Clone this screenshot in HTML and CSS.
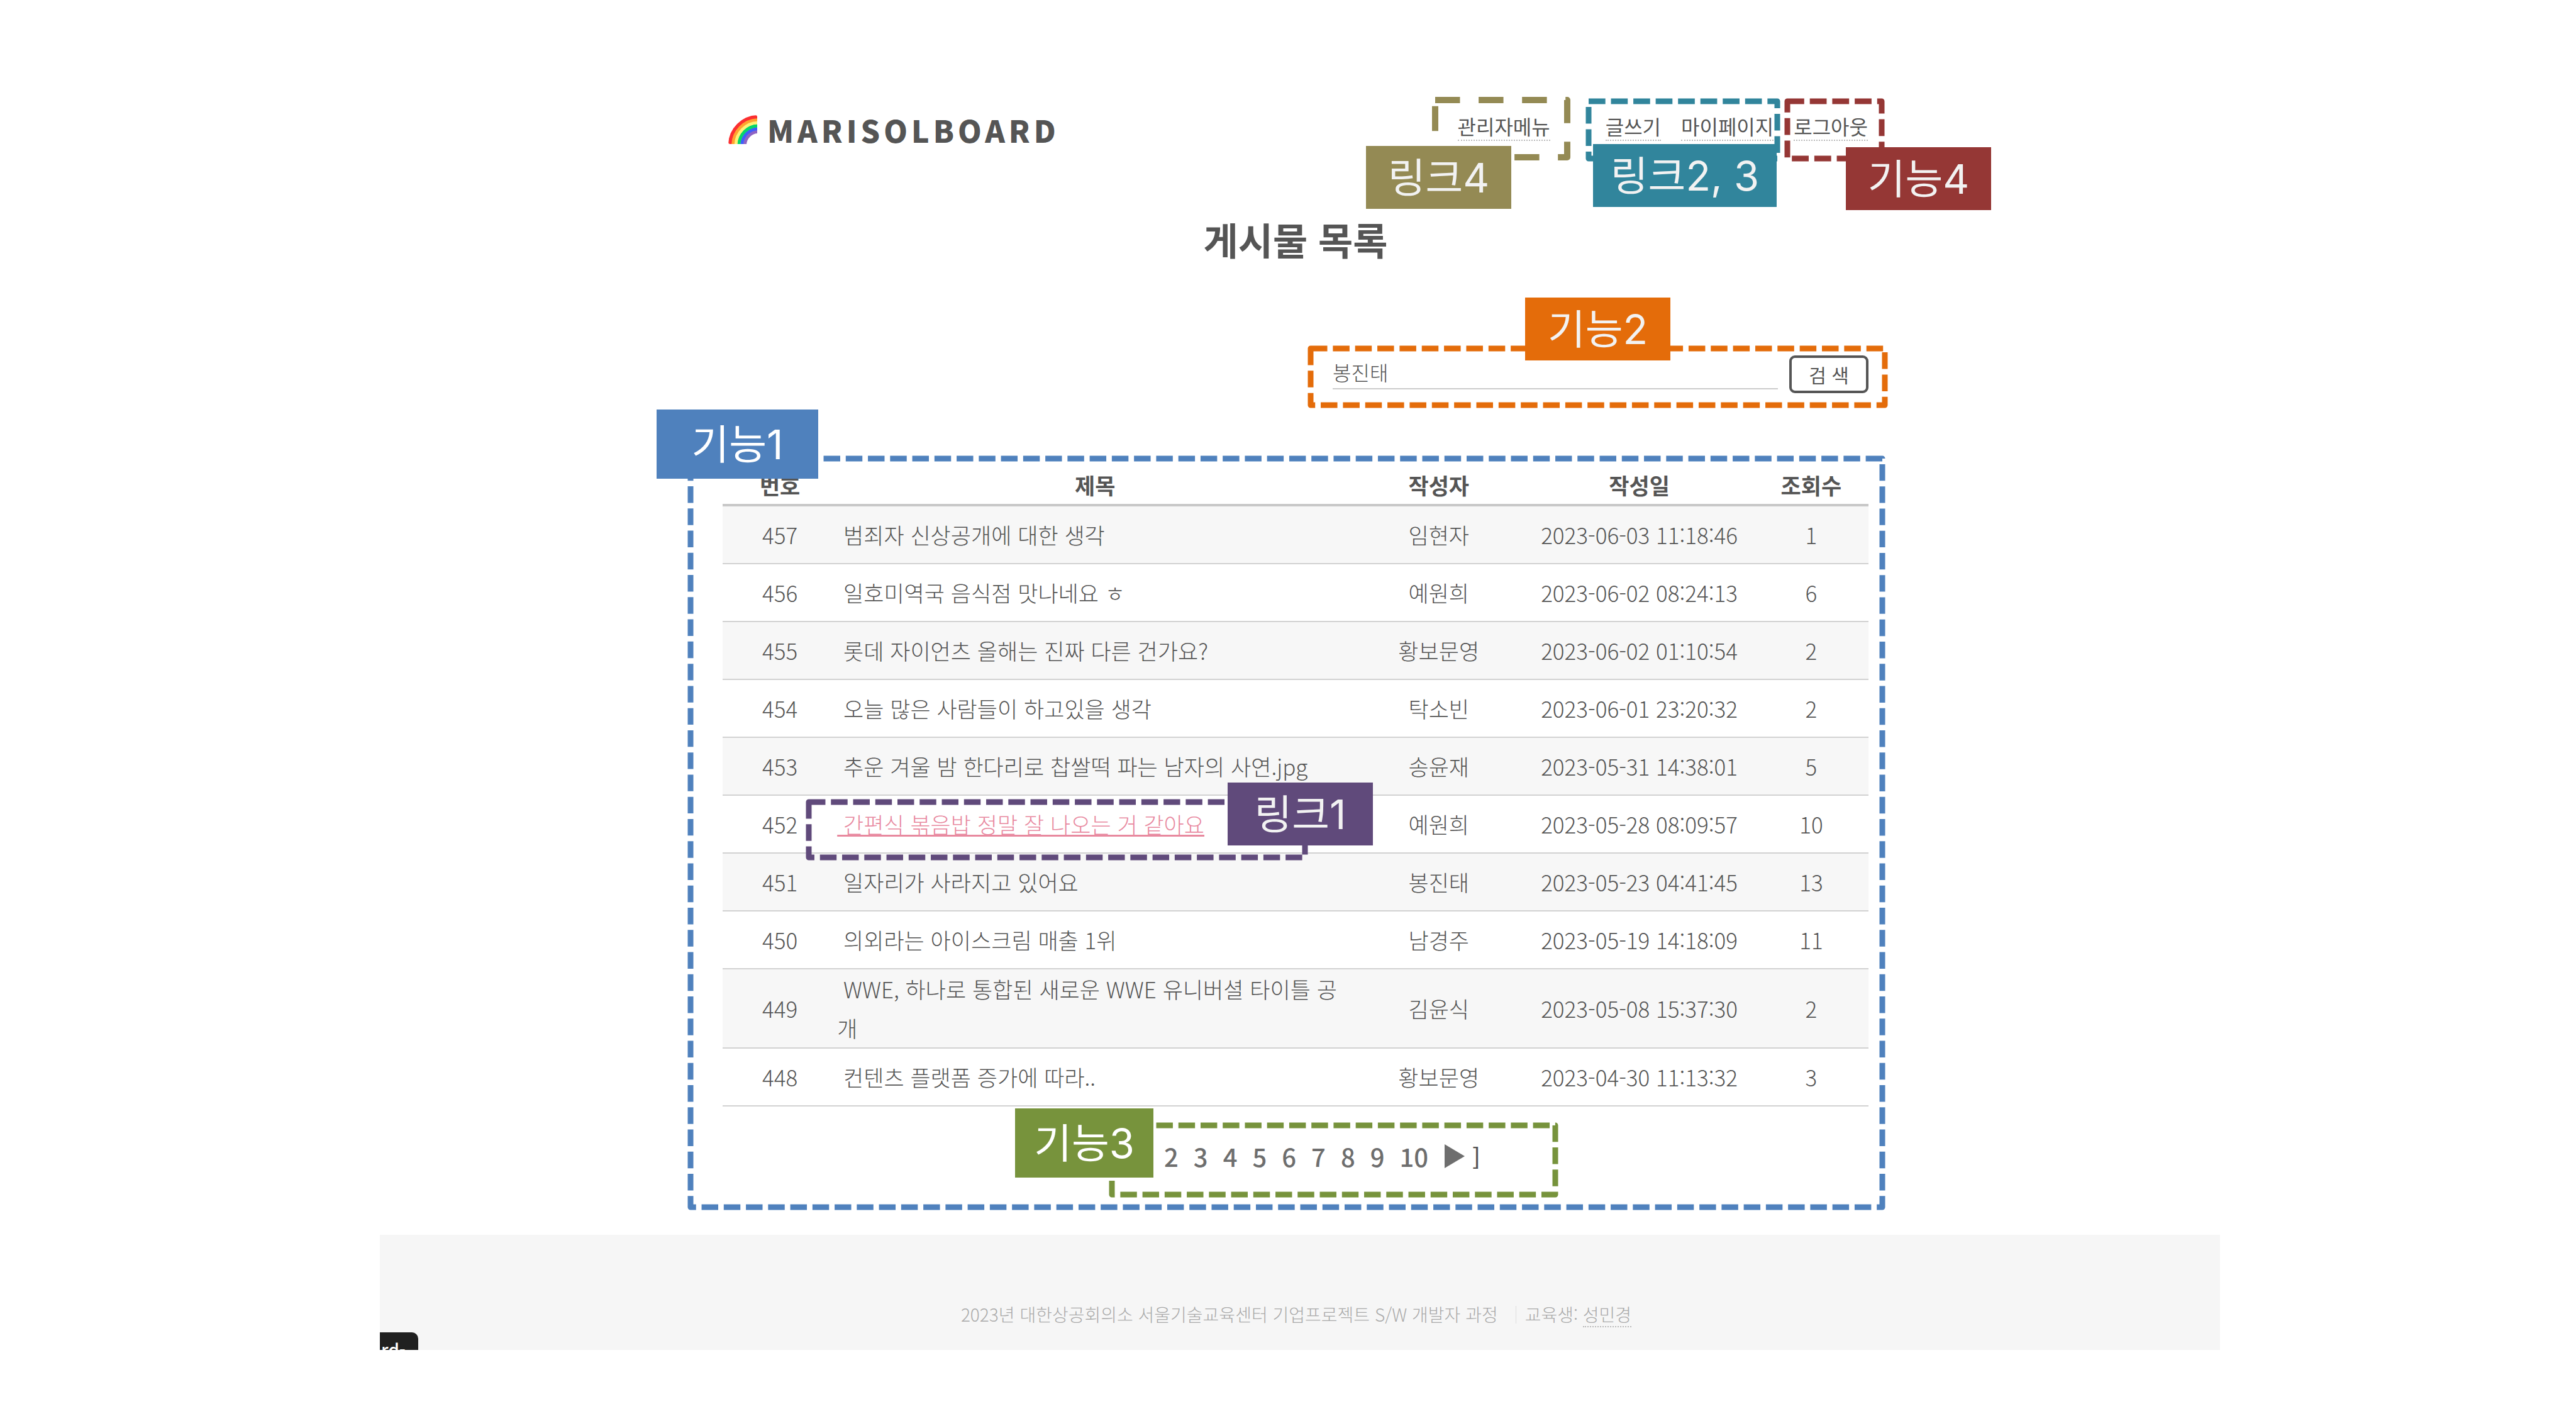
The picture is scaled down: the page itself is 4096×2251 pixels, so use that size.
FILE: index.html
```html
<!DOCTYPE html>
<html lang="ko">
<head>
<meta charset="utf-8">
<title>MARISOLBOARD - 게시물 목록</title>
<link rel="stylesheet" href="styles.css">
</head>
<body>
<div class="page">
  <main class="board">
    <header class="topbar">
      <a class="logo" href="#">
        <svg class="rainbow" viewBox="0 0 48 48" aria-hidden="true">
          <g fill="none" stroke-width="5.4">
            <circle cx="50" cy="50" r="22.5" stroke="#8e63c4"/>
            <circle cx="50" cy="50" r="27.5" stroke="#3f5efb"/>
            <circle cx="50" cy="50" r="32.5" stroke="#06d66a"/>
            <circle cx="50" cy="50" r="37.5" stroke="#fff176"/>
            <circle cx="50" cy="50" r="42.5" stroke="#ffa52e"/>
            <circle cx="50" cy="50" r="47.3" stroke="#fb2f30"/>
          </g>
        </svg>
        <span>MARISOLBOARD</span>
      </a>
      <nav class="menu">
        <a class="admin" href="#">관리자메뉴</a>
        <a href="#">글쓰기</a>
        <a href="#">마이페이지</a>
        <a href="#">로그아웃</a>
      </nav>
    </header>

    <h1>게시물 목록</h1>

    <form class="search">
      <input type="text" aria-label="검색어" value="봉진태">
      <button type="button">검 색</button>
    </form>

    <table class="posts">
      <colgroup><col class="c-no"><col class="c-title"><col class="c-author"><col class="c-date"><col class="c-count"></colgroup>
      <thead>
        <tr><th>번호</th><th>제목</th><th>작성자</th><th>작성일</th><th>조회수</th></tr>
      </thead>
      <tbody>
        <tr><td>457</td><td><a href="#">&nbsp;범죄자 신상공개에 대한 생각</a></td><td>임현자</td><td>2023-06-03 11:18:46</td><td>1</td></tr>
        <tr><td>456</td><td><a href="#">&nbsp;일호미역국 음식점 맛나네요 ㅎ</a></td><td>예원희</td><td>2023-06-02 08:24:13</td><td>6</td></tr>
        <tr><td>455</td><td><a href="#">&nbsp;롯데 자이언츠 올해는 진짜 다른 건가요?</a></td><td>황보문영</td><td>2023-06-02 01:10:54</td><td>2</td></tr>
        <tr><td>454</td><td><a href="#">&nbsp;오늘 많은 사람들이 하고있을 생각</a></td><td>탁소빈</td><td>2023-06-01 23:20:32</td><td>2</td></tr>
        <tr><td>453</td><td><a href="#">&nbsp;추운 겨울 밤 한다리로 찹쌀떡 파는 남자의 사연.jpg</a></td><td>송윤재</td><td>2023-05-31 14:38:01</td><td>5</td></tr>
        <tr><td>452</td><td><a class="active" href="#">&nbsp;간편식 볶음밥 정말 잘 나오는 거 같아요</a></td><td>예원희</td><td>2023-05-28 08:09:57</td><td>10</td></tr>
        <tr><td>451</td><td><a href="#">&nbsp;일자리가 사라지고 있어요</a></td><td>봉진태</td><td>2023-05-23 04:41:45</td><td>13</td></tr>
        <tr><td>450</td><td><a href="#">&nbsp;의외라는 아이스크림 매출 1위</a></td><td>남경주</td><td>2023-05-19 14:18:09</td><td>11</td></tr>
        <tr><td>449</td><td><a href="#">&nbsp;WWE, 하나로 통합된 새로운 WWE 유니버셜 타이틀 공개</a></td><td>김윤식</td><td>2023-05-08 15:37:30</td><td>2</td></tr>
        <tr><td>448</td><td><a href="#">&nbsp;컨텐츠 플랫폼 증가에 따라..</a></td><td>황보문영</td><td>2023-04-30 11:13:32</td><td>3</td></tr>
      </tbody>
    </table>

    <nav class="pager" aria-label="페이지">
      <a href="#">2</a><a href="#">3</a><a href="#">4</a><a href="#">5</a><a href="#">6</a><a href="#">7</a><a href="#">8</a><a href="#">9</a><a href="#">10</a>
      <a class="next" href="#" aria-label="다음"><svg viewBox="0 0 32 38"><path d="M0 0L32 19L0 38Z"/></svg></a>
      <span class="bracket">]</span>
    </nav>

    <svg class="frame f-list"><rect width="100%" height="100%" pathLength="700"/></svg>
    <svg class="frame f-admin"><rect width="100%" height="100%" pathLength="61"/></svg>
    <svg class="frame f-links"><rect width="100%" height="100%" pathLength="88"/></svg>
    <svg class="frame f-logout"><rect width="100%" height="100%" pathLength="54"/></svg>
    <svg class="frame f-search"><rect width="100%" height="100%" pathLength="227"/></svg>
    <svg class="frame f-post"><rect width="100%" height="100%" pathLength="199"/></svg>
    <svg class="frame f-pager"><rect width="100%" height="100%" pathLength="185"/></svg>

    <div class="tag t-list">기능1</div>
    <div class="tag t-admin">링크4</div>
    <div class="tag t-links">링크2, 3</div>
    <div class="tag t-logout">기능4</div>
    <div class="tag t-search">기능2</div>
    <div class="tag t-post">링크1</div>
    <div class="tag t-pager">기능3</div>
  </main>

  <footer class="footer">
    <span>2023년 대한상공회의소 서울기술교육센터 기업프로젝트 S/W 개발자 과정</span>
    <span class="credit">교육생: <a href="#">성민경</a></span>
    <div class="status">rd-</div>
  </footer>
</div>
</body>
</html>
```
FILE: styles.css
```css
* { box-sizing: border-box; }

body {
  margin: 0;
  background: #fff;
  color: #555;
  font-family: "Noto Sans CJK KR", "Noto Sans", sans-serif;
  font-weight: 300;
  font-size: 35px;
}

a { color: inherit; text-decoration: none; }

.page { margin: 0 566px 0 604px; }

.board {
  position: relative;
  padding: 178px 0 95px;
  margin: 0 559px 0 545px;
}

.topbar { display: flex; justify-content: space-between; height: 56px; }

.logo {
  display: flex;
  align-items: center;
  gap: 16px;
  margin-left: 9px;
  font-size: 48px;
  font-weight: 900;
  line-height: 54px;
  letter-spacing: 6px;
}
.rainbow { width: 46px; height: 46px; border-radius: 3px; }

.menu { display: flex; align-items: flex-start; gap: 32px; margin-right: 1px; font-size: 32px; font-weight: 400; line-height: 44px; }
.menu a { border-bottom: 2px dotted #bbb; }
.menu .admin { margin-right: 56px; }

h1 {
  margin: 101px 0 140px;
  font-size: 60px;
  font-weight: 700;
  line-height: 90px;
  text-align: center;
}

.search { display: flex; align-items: flex-start; gap: 18px; margin: 0 0 116px 970px; }
.search input {
  flex: 1;
  min-width: 0;
  height: 54px;
  padding: 0;
  border: 0;
  border-bottom: 2px solid #ccc;
  background: none;
  color: inherit;
  font: 300 32px "Noto Sans CJK KR", sans-serif;
}
.search button {
  width: 126px;
  height: 60px;
  padding: 0;
  border: 4px solid #555;
  border-radius: 9px;
  background: #fff;
  color: #555;
  font: 400 30px/48px "Noto Sans CJK KR", sans-serif;
}

.posts { width: 100%; table-layout: fixed; border-spacing: 0; text-align: center; }
.c-no, .c-count { width: 10%; }
.c-title { width: 45%; }
.c-author { width: 15%; }
.c-date { width: 20%; }
.posts th { padding: 0; border-bottom: 4px solid #c8c8c8; font-weight: 700; line-height: 60px; }
.posts td { height: 92px; padding: 0; border-bottom: 2px solid #d2d2d2; line-height: 62px; }
.posts td:nth-child(2) { text-align: left; }
.posts tbody tr:nth-child(odd) { background: #f7f7f7; }
.posts .active { color: #e8899f; text-decoration: underline; text-decoration-thickness: 3px; }

.pager {
  display: flex;
  align-items: center;
  gap: 24px;
  margin: 49px 0 0 702px;
  color: #6e6e6e;
  font-size: 40px;
  font-weight: 500;
  line-height: 60px;
}
.next { margin-left: 2px; }
.next svg { display: block; width: 32px; height: 38px; fill: #6e6e6e; }
.bracket { margin-left: -12px; color: #555; font-size: 36px; font-weight: 500; }

.footer {
  position: relative;
  display: flex;
  justify-content: center;
  gap: 28px;
  padding: 107px 12px 36px 0;
  overflow: hidden;
  background: #f6f6f6;
  color: #aaa;
  font-size: 28px;
  line-height: 38px;
}
.credit { padding-left: 15px; background: linear-gradient(#ddd, #ddd) 0 6px / 1px 28px no-repeat; }
.credit a { display: inline-block; border-bottom: 2px dotted #bbb; }
.status {
  position: absolute;
  left: 0;
  top: 155px;
  width: 61px;
  height: 54px;
  padding-left: 2px;
  border-radius: 0 10px 0 0;
  background: #202020;
  color: #fff;
  font-size: 28px;
  font-weight: 500;
  line-height: 54px;
}

/* dashed callout frames; path lengths are in dash units */
.frame {
  position: absolute;
  overflow: visible;
  fill: none;
  stroke-width: 9px;
  stroke-dasharray: 3 1;
  stroke-linejoin: round;
  pointer-events: none;
}
.f-list { left: -51px; top: 729px; width: calc(100% + 73px); height: 1190px; stroke: #4f81bd; }
.f-admin { right: 479px; top: 159px; width: 210px; height: 91px; stroke: #948a54; stroke-width: 10px; stroke-dasharray: 4 3; }
.f-links { right: 145px; top: 161px; width: 300px; height: 91px; stroke: #31859c; }
.f-logout { right: -21px; top: 161px; width: 150px; height: 91px; stroke: #953735; }
.f-search { right: -26px; top: 554px; width: 913px; height: 90px; stroke: #e46c0a; }
.f-post { left: 137px; top: 1275px; width: 789px; height: 88px; stroke: #604a7b; }
.f-pager { left: 619px; top: 1789px; width: 705px; height: 110px; stroke: #77933c; }

.tag {
  position: absolute;
  width: 231px;
  height: 100px;
  color: #f2f2f2;
  font-family: Inter, "Noto Sans CJK KR", sans-serif;
  font-size: 65px;
  font-weight: 400;
  line-height: 102px;
  text-align: center;
  white-space: nowrap;
}
.t-list { left: -105px; top: 651px; width: 257px; height: 110px; line-height: 112px; background: #4f81bd; color: #fff; }
.t-admin { right: 568px; top: 232px; background: #948a54; }
.t-links { right: 146px; top: 229px; width: 292px; background: #31859c; }
.t-logout { right: -195px; top: 234px; background: #953735; }
.t-search { right: 315px; top: 473px; background: #e46c0a; }
.t-post { left: 803px; top: 1244px; background: #604a7b; }
.t-pager { left: 465px; top: 1762px; width: 220px; height: 110px; line-height: 112px; background: #77933c; color: #fff; }
```
